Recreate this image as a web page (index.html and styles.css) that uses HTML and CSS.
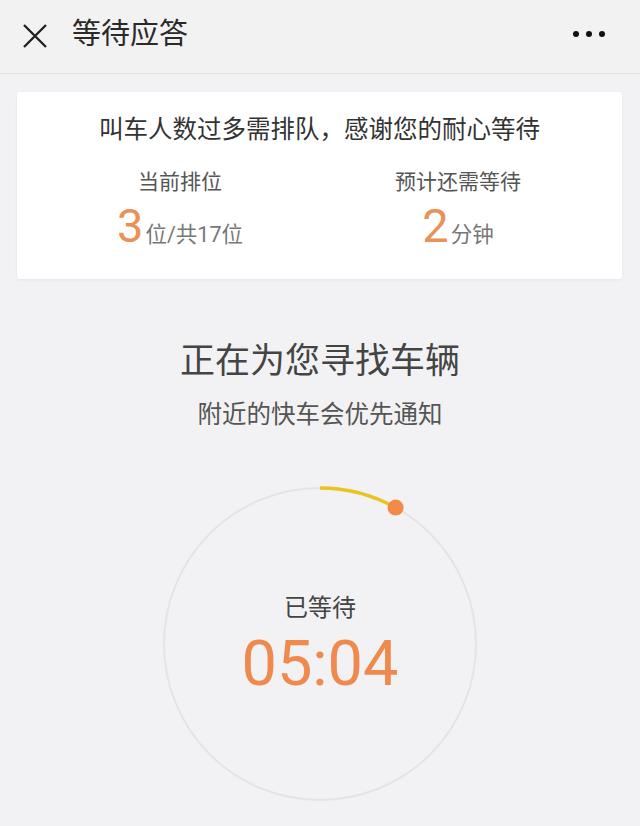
FILE: index.html
```html
<!DOCTYPE html>
<html lang="zh-CN">
<head>
<meta charset="utf-8">
<title>等待应答</title>
<link rel="stylesheet" href="styles.css">
</head>
<body>
<header class="topbar">
  <svg class="close" width="26" height="26" viewBox="0 0 26 26"><path d="M2 2 L24 24 M24 2 L2 24" stroke="#222" stroke-width="2.4" fill="none"/></svg>
  <h1 class="title">等待应答</h1>
  <div class="more"><span></span><span></span><span></span></div>
</header>
<section class="card">
  <p class="card-title">叫车人数过多需排队，感谢您的耐心等待</p>
  <div class="stats">
    <div class="stat">
      <div class="stat-label">当前排位</div>
      <div class="stat-value"><span class="big">3</span><span class="unit">位/共17位</span></div>
    </div>
    <div class="stat">
      <div class="stat-label">预计还需等待</div>
      <div class="stat-value"><span class="big">2</span><span class="unit">分钟</span></div>
    </div>
  </div>
</section>
<section class="searching">
  <h2 class="search-title">正在为您寻找车辆</h2>
  <p class="search-sub">附近的快车会优先通知</p>
  <div class="ring">
    <svg class="arc" width="330" height="330" viewBox="0 0 330 330">
      <path d="M165 9 A156 156 0 0 1 240.6 28.6" stroke="#ecc31e" stroke-width="3.5" fill="none" stroke-linecap="butt"/>
      <circle cx="240.6" cy="28.6" r="8" fill="#f38a4a"/>
    </svg>
    <div class="waited">已等待</div>
    <div class="timer">05:04</div>
  </div>
</section>
</body>
</html>
```
FILE: styles.css
```css
* { box-sizing: border-box; }
html, body { margin: 0; padding: 0; }
body {
  width: 640px;
  height: 826px;
  overflow: hidden;
  background: #f2f2f4;
  font-family: Roboto, "Noto Sans CJK SC", "Noto Sans", sans-serif;
  color: #333;
}
.topbar {
  height: 74px;
  display: flex;
  align-items: center;
  padding: 0 22px 0 22px;
  border-bottom: 1px solid #e4e4e6;
  background: #f2f2f2;
}
.close { display: block; margin-top: -2px; }
.title {
  margin: 0 0 0 24px;
  font-size: 29px;
  font-weight: 400;
  color: #2a2a2a;
  line-height: 40px;
  margin-top: -6px;
  flex: 1;
}
.more { display: flex; gap: 7px; margin-right: 13px; margin-top: -6px; }
.more span { width: 6px; height: 6px; border-radius: 50%; background: #111; display: block; }

.card {
  margin: 18px 18px 0 17px;
  height: 187px;
  background: #fff;
  border-radius: 3px;
  box-shadow: 0 1px 3px rgba(0,0,0,0.06);
  padding-top: 22px;
}
.card-title {
  margin: 0;
  text-align: center;
  font-size: 24.5px;
  line-height: 32px;
  color: #333;
}
.stats {
  display: grid;
  grid-template-columns: 278px 278px;
  padding-left: 24px;
  margin-top: 22px;
}
.stat { text-align: center; }
.stat-label {
  font-size: 21px;
  line-height: 28px;
  color: #555;
}
.stat-value {
  line-height: 50px;
  margin-top: 5px;
  white-space: nowrap;
}
.big {
  font-size: 47px;
  color: #ea915a;
  font-weight: 400;
}
.unit {
  font-size: 21.5px;
  color: #777;
  margin-left: 2px;
}

.searching {
  display: flex;
  flex-direction: column;
  align-items: center;
}
.search-title {
  margin: 61px 0 0 0;
  font-size: 35px;
  font-weight: 400;
  line-height: 44px;
  color: #444;
}
.search-sub {
  margin: 14px 0 0 0;
  font-size: 24.5px;
  line-height: 34px;
  color: #555;
}
.ring {
  position: relative;
  margin-top: 55px;
  width: 314px;
  height: 314px;
  border: 2px solid #e4e4e6;
  border-radius: 50%;
  display: flex;
  flex-direction: column;
  align-items: center;
  padding-top: 103px;
}
.arc {
  position: absolute;
  left: -10px;
  top: -10px;
}
.waited {
  font-size: 24px;
  line-height: 32px;
  color: #444;
}
.timer {
  font-size: 63px;
  line-height: 70px;
  color: #ee8a4d;
  margin-top: 5px;
}
```
